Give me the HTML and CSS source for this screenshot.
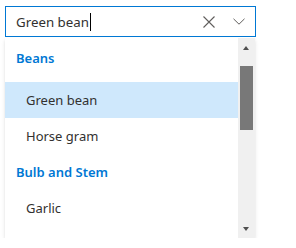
FILE: index.html
```html
<!DOCTYPE html>
<html>
<head>
<meta charset="utf-8">
<link rel="stylesheet" href="styles.css">
</head>
<body>
<div class="combo">
  <div class="field">
    <span class="value">Green bean</span><span class="caret"></span>
    <span class="spacer"></span>
    <button class="icon-btn clear" aria-label="Clear">
      <svg width="12" height="12" viewBox="0 0 12 12"><path d="M0.5 0.5 L11.5 11.5 M11.5 0.5 L0.5 11.5" stroke="#605e5c" stroke-width="1.1" fill="none"/></svg>
    </button>
    <button class="icon-btn chevron" aria-label="Open">
      <svg width="12" height="7" viewBox="0 0 12 7"><path d="M0.5 0.8 L6 6.2 L11.5 0.8" stroke="#605e5c" stroke-width="1" fill="none"/></svg>
    </button>
  </div>
  <div class="dropdown">
    <div class="list">
      <div class="header first">Beans</div>
      <div class="item selected">Green bean</div>
      <div class="item">Horse gram</div>
      <div class="header">Bulb and Stem</div>
      <div class="item">Garlic</div>
    </div>
    <div class="scrollbar">
      <div class="arrow up"></div>
      <div class="track"><div class="thumb"></div></div>
      <div class="arrow down"></div>
    </div>
  </div>
</div>
</body>
</html>
```
FILE: styles.css
```css
* { box-sizing: border-box; }
html, body { margin: 0; padding: 0; background: #ffffff; }
body {
  font-family: "Noto Sans", "Open Sans", sans-serif;
  font-size: 13px;
  color: #323130;
}
.combo {
  width: 251px;
  margin: 6px 0 0 5px;
}
.field {
  height: 31px;
  border: 1px solid #0078d4;
  display: flex;
  align-items: center;
  padding-left: 10px;
}
.value { line-height: 20px; font-size: 13.3px; }
.caret {
  width: 1px;
  height: 18px;
  background: #000;
  margin-left: 1px;
}
.spacer { flex: 1; }
.icon-btn {
  border: 0;
  background: none;
  padding: 0;
  display: flex;
  align-items: center;
  justify-content: center;
}
.clear { width: 12px; height: 12px; margin-right: 18px; }
.chevron { width: 12px; height: 7px; margin-right: 10px; }
.dropdown {
  margin-top: 1px;
  height: 200px;
  width: 250px;
  display: flex;
  background: #fff;
  box-shadow: 0 1.6px 3.6px rgba(0,0,0,0.13), 0 0.3px 0.9px rgba(0,0,0,0.11);
}
.list {
  flex: 1;
  overflow: hidden;
  padding-top: 2px;
}
.header {
  height: 36px;
  line-height: 36px;
  padding-left: 11px;
  color: #0078d4;
  font-weight: 600;
}
.header.first { height: 42px; }
.item {
  height: 36px;
  line-height: 36px;
  padding-left: 21px;
}
.item.selected { background: #cfe8fc; }
.scrollbar {
  width: 17px;
  background: #f0f0f0;
  display: flex;
  flex-direction: column;
}
.arrow {
  height: 17px;
  position: relative;
}
.arrow::after {
  content: "";
  position: absolute;
  left: 5px;
  width: 0; height: 0;
  border-left: 3.5px solid transparent;
  border-right: 3.5px solid transparent;
}
.arrow.up::after { top: 8px; border-bottom: 4px solid #505050; }
.arrow.down::after { top: 6px; border-top: 4px solid #505050; }
.track {
  flex: 1;
  padding: 11px 2px 0 2px;
}
.thumb {
  height: 64px;
  background: #787878;
}
```
